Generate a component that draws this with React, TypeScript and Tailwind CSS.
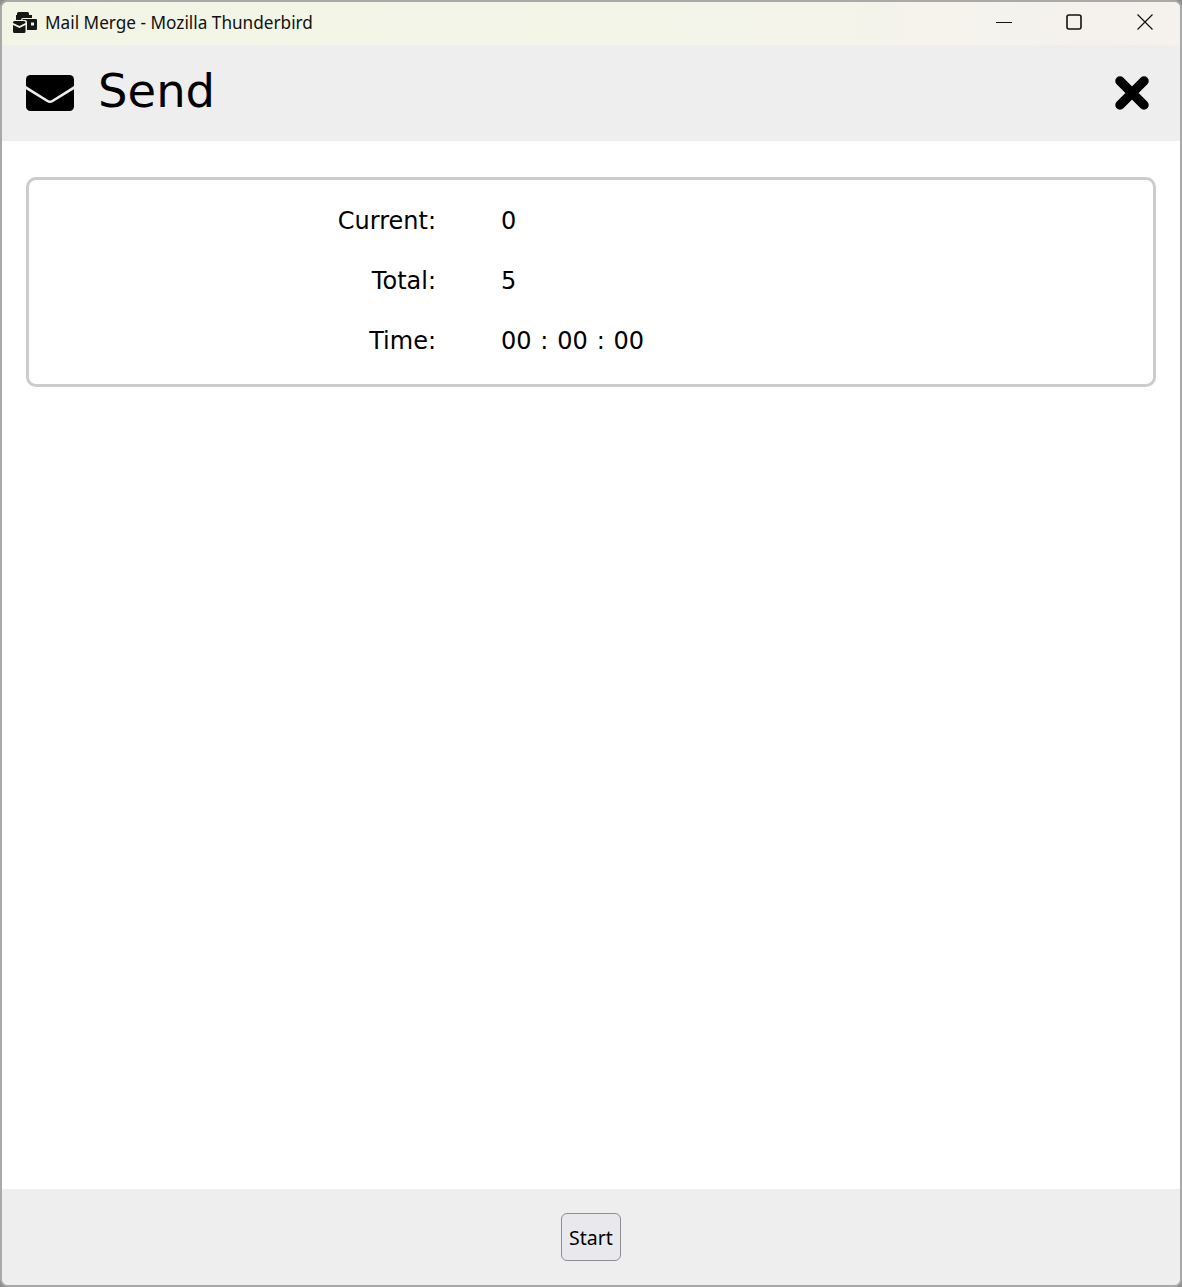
import React from 'react';

const rows = [
  { label: 'Current:', value: '0' },
  { label: 'Total:', value: '5' },
  { label: 'Time:', value: '00 : 00 : 00' },
];

function AppIcon() {
  return (
    <svg width="24" height="21" viewBox="0 0 24 21" fill="none">
      <path d="M4 1.500A1.500 1.500 0 0 1 5.500 0h9A1.500 1.500 0 0 1 16 1.500V3h3v3H10a2 2 0 0 0-2 2H3V3h1z" fill="#171717" />
      <path d="M9.500 7H23a1 1 0 0 1 1 1v9a1 1 0 0 1-1 1h-9V10a2 2 0 0 0-2-2H9.500z" fill="#171717" />
      <rect x="18" y="10.500" width="3" height="3" fill="#f2f4e6" />
      <path d="M1.500 9h9.500a1.500 1.500 0 0 1 1.500 1.500v.5L6.500 14 0 11v-.5A1.500 1.500 0 0 1 1.500 9z" fill="#171717" />
      <path d="M0 13l6.500 3 6-3v6.500a1.500 1.500 0 0 1-1.500 1.500H1.500A1.500 1.500 0 0 1 0 19.500z" fill="#171717" />
    </svg>
  );
}

function MailIcon() {
  return (
    <svg width="48" height="36" viewBox="0 0 48 36">
      <rect width="48" height="36" rx="4.500" fill="#000" />
      <path d="M-1 12 L21.500 26 Q24 27.500 26.500 26 L49 12" fill="none" stroke="#eeeeee" strokeWidth="2.600" />
    </svg>
  );
}

function CloseIcon() {
  return (
    <svg width="34" height="34" viewBox="0 0 34 34">
      <path d="M5 5 L29 29 M29 5 L5 29" stroke="#000" strokeWidth="9.500" strokeLinecap="round" />
    </svg>
  );
}

export default function App() {
  return (
    <div className="w-[1182px] h-[1287px] bg-[#8f8f8f]">
      <div className="w-full h-full flex flex-col overflow-hidden rounded-lg border-2 border-[#a9a9a9] bg-white">
        {/* title bar */}
        <div className="h-[43px] shrink-0 flex items-center pb-[3px] bg-gradient-to-r from-[#f2f5e5] via-[#f3f5e8] to-[#f5f1ee] text-[17.2px] text-[#111] font-['Noto_Sans','Open_Sans',sans-serif]">
          <div className="ml-[11px] flex items-center gap-2">
            <AppIcon />
            <span className="leading-none mt-[2px]">Mail Merge - Mozilla Thunderbird</span>
          </div>
          <div className="ml-auto flex items-center h-full">
            <svg width="18" height="18" viewBox="0 0 18 18" className="mr-[52px]">
              <path d="M1 9.500h16" stroke="#111" strokeWidth="1.200" />
            </svg>
            <svg width="18" height="18" viewBox="0 0 18 18" className="mr-[53px]">
              <rect x="2" y="2" width="14" height="14" rx="2" fill="none" stroke="#111" strokeWidth="1.600" />
            </svg>
            <svg width="18" height="18" viewBox="0 0 18 18" className="mr-[26px]">
              <path d="M1.500 1.500l15 15M16.500 1.500l-15 15" stroke="#111" strokeWidth="1.200" />
            </svg>
          </div>
        </div>

        {/* header */}
        <div className="h-[96px] shrink-0 bg-[#eeeeee] flex items-center pl-6 pr-[31px] font-['DejaVu_Sans',sans-serif]">
          <MailIcon />
          <span className="ml-6 text-[46.5px] leading-none text-black -mt-1">Send</span>
          <button className="ml-auto"><CloseIcon /></button>
        </div>

        {/* content */}
        <div className="flex-1 px-6 pt-9 font-['DejaVu_Sans',sans-serif]">
          <div className="h-[210px] rounded-[10px] border-[3px] border-[#cccccc] flex flex-col justify-center gap-[30px] pb-[2px]">
            {rows.map((row) => (
              <div key={row.label} className="grid grid-cols-[407px_1fr] gap-x-[65px] text-[24px] leading-[30px] text-black">
                <div className="text-right">{row.label}</div>
                <div className="[word-spacing:1.2px]">{row.value}</div>
              </div>
            ))}
          </div>
        </div>

        {/* footer */}
        <div className="h-[96px] shrink-0 bg-[#eeeeee] flex items-center justify-center">
          <button className="w-[60px] h-[48px] pt-[2px] rounded-md border border-[#8d8d93] bg-[#e9e9ed] text-[19.5px] text-black font-['Noto_Sans',sans-serif]">
            Start
          </button>
        </div>
      </div>
    </div>
  );
}
